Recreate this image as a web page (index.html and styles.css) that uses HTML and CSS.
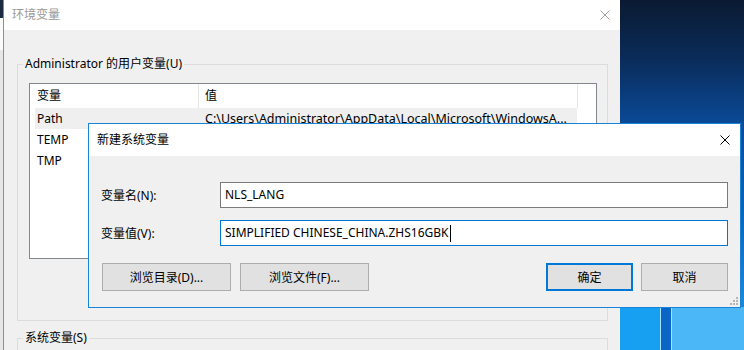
FILE: index.html
```html
<!DOCTYPE html>
<html lang="zh-CN">
<head>
    <meta charset="UTF-8">
    <title>环境变量</title>
    <link rel="stylesheet" href="styles.css">
</head>
<body>

<div class="screen">
    <div class="edge"></div>

    <div class="env-window">
        <div class="titlebar">
            <span class="title">环境变量</span>
            <svg class="close" width="10" height="10" viewBox="0 0 10 10">
                <path d="M0.5 0.5 L9.5 9.5 M9.5 0.5 L0.5 9.5" stroke="#a0a0a0" stroke-width="1" fill="none"/>
            </svg>
        </div>
        <div class="env-body">
            <fieldset class="group user-group">
                <legend>Administrator 的用户变量(U)</legend>
                <div class="listview">
                    <div class="lv-header">
                        <span class="col-name">变量</span>
                        <span class="col-value">值</span>
                    </div>
                    <div class="lv-row selected">
                        <span class="col-name">Path</span>
                        <span class="col-value">C:\Users\Administrator\AppData\Local\Microsoft\WindowsA...</span>
                    </div>
                    <div class="lv-row">
                        <span class="col-name">TEMP</span>
                    </div>
                    <div class="lv-row">
                        <span class="col-name">TMP</span>
                    </div>
                </div>
            </fieldset>
            <fieldset class="group system-group">
                <legend>系统变量(S)</legend>
            </fieldset>
        </div>
    </div>

    <div class="desktop"></div>
</div>

<div class="dialog">
    <div class="dialog-titlebar">
        <span class="dialog-title">新建系统变量</span>
        <svg class="close" width="10" height="10" viewBox="0 0 10 10">
            <path d="M0.5 0.5 L9.5 9.5 M9.5 0.5 L0.5 9.5" stroke="#000" stroke-width="1" fill="none"/>
        </svg>
    </div>
    <div class="dialog-body">
        <div class="form">
            <label class="field-label">变量名(N):</label>
            <div class="textbox">NLS_LANG</div>
            <label class="field-label">变量值(V):</label>
            <div class="textbox focused">SIMPLIFIED CHINESE_CHINA.ZHS16GBK<span class="caret"></span></div>
        </div>
        <div class="buttons">
            <button class="btn btn-browse">浏览目录(D)...</button>
            <button class="btn btn-browse">浏览文件(F)...</button>
            <span class="spacer"></span>
            <button class="btn btn-small btn-default">确定</button>
            <button class="btn btn-small">取消</button>
        </div>
    </div>
    <svg class="grip" width="9" height="9" viewBox="0 0 9 9">
        <rect x="7" y="1" width="2" height="2" fill="#b4b4b4"/>
        <rect x="4" y="4" width="2" height="2" fill="#b4b4b4"/>
        <rect x="7" y="4" width="2" height="2" fill="#b4b4b4"/>
        <rect x="1" y="7" width="2" height="2" fill="#b4b4b4"/>
        <rect x="4" y="7" width="2" height="2" fill="#b4b4b4"/>
        <rect x="7" y="7" width="2" height="2" fill="#b4b4b4"/>
    </svg>
</div>

</body>
</html>
```

FILE: styles.css
```css
body {
    margin: 0;
    width: 744px;
    height: 350px;
    overflow: hidden;
    position: relative;
    font-family: "Noto Sans", "Noto Sans CJK SC", sans-serif;
    font-size: 12px;
    color: #000;
    background-color: #f0f0f0;
}
.screen {
    display: flex;
    height: 350px;
    overflow: hidden;
}
.edge {
    width: 3px;
    background: linear-gradient(to bottom, #1b2a40 0, #1b2a40 18px, #fafafa 18px, #fafafa 50px, #e6e6e6 50px);
}
.env-window {
    width: 616px;
    border-left: 1px solid #8e8e8e;
    background-color: #f0f0f0;
    overflow: hidden;
}
.titlebar {
    height: 30px;
    background-color: #fff;
    display: flex;
    align-items: center;
    justify-content: space-between;
    padding: 0 10px 0 8px;
}
.title {
    color: #999;
    line-height: 16px;
}
.env-body {
    padding: 26px 12px 0 13px;
}
.group {
    margin: 0;
    padding: 0 10px 61px 0;
    border: 1px solid #dcdcdc;
}
.group legend {
    margin-left: 5px;
    padding: 0 2px;
    line-height: 16px;
}
.system-group {
    margin-top: 9px;
    padding-bottom: 20px;
}
.listview {
    margin: 11px 0 0 11px;
    height: 174px;
    border: 1px solid #828790;
    background-color: #fff;
}
.lv-header {
    display: flex;
    height: 24px;
    line-height: 24px;
}
.lv-header .col-name {
    width: 161px;
    padding-left: 7px;
    border-right: 1px solid #e5e5e5;
}
.lv-header .col-value {
    width: 372px;
    padding-left: 6px;
    border-right: 1px solid #e5e5e5;
}
.lv-row {
    display: flex;
    height: 21px;
    line-height: 21px;
    margin-left: 5px;
    width: 542px;
    white-space: nowrap;
}
.lv-row.selected {
    background-color: #efefef;
}
.lv-row .col-name {
    width: 162px;
    padding-left: 2px;
}
.lv-row .col-value {
    padding-left: 6px;
    font-size: 12.5px;
}
.desktop {
    flex: 1;
    background:
        linear-gradient(to right, #17a0f1 0, #17a0f1 40px, #a8e4ff 40px, #a8e4ff 41px, #0a65c6 41px, #0a65c6 51px, #a8e4ff 51px, #a8e4ff 52px, #4bb7f6 52px) left bottom / 100% 43px no-repeat,
        linear-gradient(to bottom, #0b1a32 0, #0a2c5a 60px, #0a4d9e 130px, #0b66c4 220px, #1488e0 300px);
}
.dialog {
    position: absolute;
    left: 88px;
    top: 123px;
    width: 653px;
    height: 185px;
    box-sizing: border-box;
    border: 1px solid #1883d7;
    background-color: #f0f0f0;
    display: flex;
    flex-direction: column;
}
.dialog-titlebar {
    height: 32px;
    flex-shrink: 0;
    background-color: #fff;
    display: flex;
    align-items: center;
    justify-content: space-between;
    padding: 0 10px 0 8px;
}
.dialog-title {
    line-height: 16px;
}
.dialog-body {
    padding: 26px 12px 16px 12px;
}
.form {
    display: grid;
    grid-template-columns: 119px 1fr;
    row-gap: 12px;
    align-items: center;
}
.textbox {
    height: 26px;
    box-sizing: border-box;
    border: 1px solid #7a7a7a;
    background-color: #fff;
    padding-left: 4px;
    line-height: 24px;
    display: flex;
    align-items: center;
}
.textbox.focused {
    border-color: #0078d7;
}
.caret {
    display: inline-block;
    width: 1px;
    height: 17px;
    margin-left: 1px;
    background-color: #000;
}
.buttons {
    display: flex;
    margin-top: 17px;
    margin-left: 1px;
    gap: 9px;
}
.spacer {
    flex: 1;
}
.btn {
    height: 28px;
    box-sizing: border-box;
    font-family: inherit;
    font-size: 12px;
    color: #000;
    background-color: #e1e1e1;
    border: 1px solid #adadad;
    padding: 0;
}
.btn-browse {
    width: 129px;
}
.btn-small {
    width: 87px;
}
.btn-default {
    border: 2px solid #0078d7;
    margin-right: -1px;
}
.grip {
    position: absolute;
    right: 2px;
    bottom: 2px;
}
```
